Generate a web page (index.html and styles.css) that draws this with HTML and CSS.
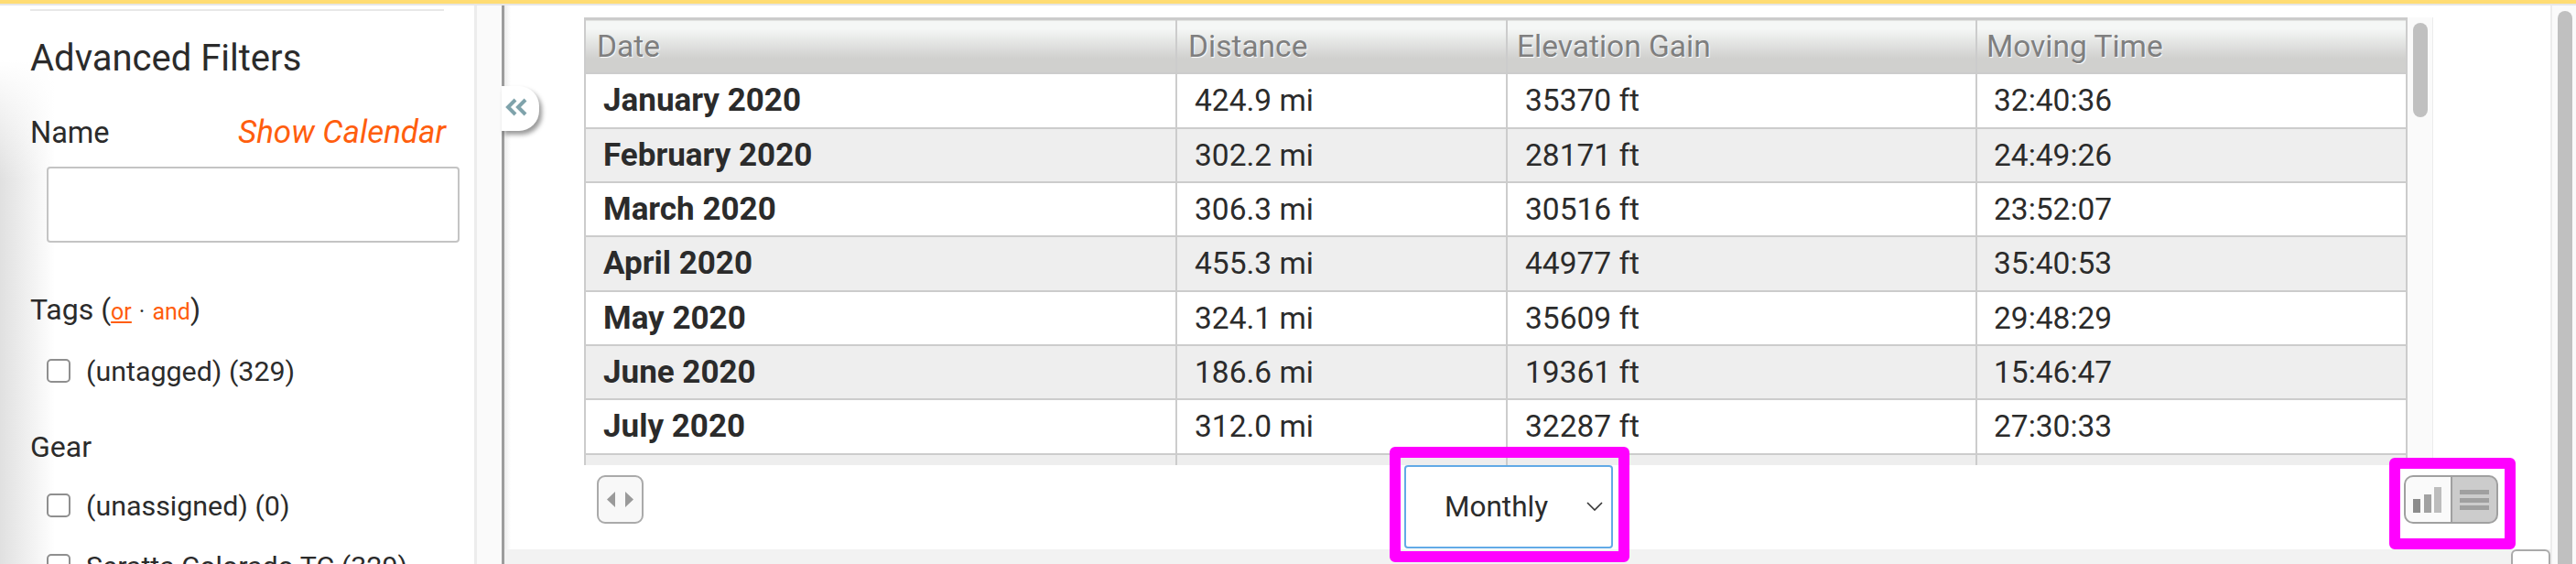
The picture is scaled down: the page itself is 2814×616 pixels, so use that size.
FILE: index.html
```html
<!DOCTYPE html>
<html>
<head>
  <title>Activity Summary</title>
  <link rel="stylesheet" href="styles.css">
</head>
<body>
  <div class="top-bar"></div>

  <div class="page">
    <!-- Filters column -->
    <aside class="sidebar">
      <hr class="side-rule">
      <h2 class="side-title">Advanced Filters</h2>

      <div class="name-row">
        <span>Name</span>
        <a class="calendar-link">Show Calendar</a>
      </div>
      <input class="name-input" type="text">

      <div class="filter-label tags-label">Tags (<a class="mode-link active">or</a><span class="mode-dot">·</span><a class="mode-link">and</a>)</div>
      <label class="check-row"><input type="checkbox">(untagged) (329)</label>

      <div class="filter-label gear-label">Gear</div>
      <label class="check-row"><input type="checkbox">(unassigned) (0)</label>
      <label class="check-row"><input type="checkbox">Seratta Colorado TC (329)</label>
    </aside>

    <div class="gutter"></div>

    <main class="main">
      <button class="collapse-tab">
        <svg width="26" height="20" viewBox="0 0 26 20"><path d="M12 2 L4 10 L12 18 M23 2 L15 10 L23 18" fill="none" stroke="#7fa3ab" stroke-width="4"/></svg>
      </button>

      <div class="content">
        <div class="table-area">
          <div class="table-clip">
            <table class="summary-table">
              <colgroup>
                <col class="col-date">
                <col class="col-distance">
                <col class="col-elevation">
                <col>
              </colgroup>
              <thead>
                <tr><th>Date</th><th>Distance</th><th>Elevation Gain</th><th>Moving Time</th></tr>
              </thead>
              <tbody>
                <tr><td>January 2020</td><td>424.9 mi</td><td>35370 ft</td><td>32:40:36</td></tr>
                <tr><td>February 2020</td><td>302.2 mi</td><td>28171 ft</td><td>24:49:26</td></tr>
                <tr><td>March 2020</td><td>306.3 mi</td><td>30516 ft</td><td>23:52:07</td></tr>
                <tr><td>April 2020</td><td>455.3 mi</td><td>44977 ft</td><td>35:40:53</td></tr>
                <tr><td>May 2020</td><td>324.1 mi</td><td>35609 ft</td><td>29:48:29</td></tr>
                <tr><td>June 2020</td><td>186.6 mi</td><td>19361 ft</td><td>15:46:47</td></tr>
                <tr><td>July 2020</td><td>312.0 mi</td><td>32287 ft</td><td>27:30:33</td></tr>
                <tr><td></td><td></td><td></td><td></td></tr>
              </tbody>
            </table>
          </div>
          <div class="table-track"><div class="table-thumb"></div></div>
        </div>

        <div class="controls">
          <button class="expand-btn">
            <svg width="29" height="17" viewBox="0 0 29 17"><path d="M9 0 V17 L0 8.5 Z M20 0 V17 L29 8.5 Z" fill="#9a9a9a"/></svg>
          </button>

          <div class="period-select">
            <span>Monthly</span>
            <svg class="chevron" width="18" height="10" viewBox="0 0 18 10"><path d="M1 1 L9 9 L17 1" fill="none" stroke="#333" stroke-width="1.6"/></svg>
            <div class="highlight highlight-select"></div>
          </div>

          <div class="view-toggle">
            <button class="toggle-half">
              <svg width="34" height="30" viewBox="0 0 34 30">
                <rect x="0" y="14" width="8" height="15" fill="#8c8c8c"/>
                <rect x="12" y="9" width="8" height="20" fill="#a2a2a2"/>
                <rect x="23" y="1" width="8" height="28" fill="#bdbdbd"/>
              </svg>
            </button>
            <button class="toggle-half selected">
              <svg width="32" height="22" viewBox="0 0 32 22">
                <rect y="0" width="32" height="5" fill="#a0a0a0"/>
                <rect y="9" width="32" height="5" fill="#a0a0a0"/>
                <rect y="17" width="32" height="5" fill="#a0a0a0"/>
              </svg>
            </button>
            <div class="highlight highlight-toggle"></div>
          </div>
        </div>
      </div>

      <div class="bottom-band"><div class="band-box"></div></div>
    </main>

    <div class="page-track"><div class="page-thumb"></div></div>
  </div>
</body>
</html>
```

FILE: styles.css
```css
html, body {
  margin: 0;
  height: 616px;
  overflow: hidden;
}

body {
  font-family: Roboto, "Liberation Sans", sans-serif;
  color: #2b2b2b;
  background-color: #fff;
}

.top-bar {
  height: 4px;
  background-color: #ffdc73;
  border-bottom: 2px solid #e6e6e6;
}

.page {
  display: flex;
  height: 610px;
  overflow: hidden;
}

/* Filters column */
.sidebar {
  width: 485px;
  flex-shrink: 0;
  padding-left: 33px;
  padding-top: 4px;
  border-right: 3px solid #ececec;
  background:
    linear-gradient(to bottom, #fff 60px, rgba(255, 255, 255, 0) 190px),
    linear-gradient(to right, #e0e0e0, #fff 60px);
}

.side-rule {
  width: 452px;
  height: 2px;
  margin: 0;
  border: none;
  background-color: #e8e8e8;
}

.side-title {
  margin: 29px 0 0;
  font-size: 40px;
  line-height: 46px;
  font-weight: 400;
}

.name-row {
  display: flex;
  justify-content: space-between;
  align-items: baseline;
  width: 454px;
  margin-top: 39px;
  font-size: 32.5px;
  line-height: 38px;
}

.calendar-link {
  color: #ff5e0e;
  font-size: 35px;
  font-style: italic;
}

.name-input {
  display: block;
  box-sizing: border-box;
  width: 451px;
  height: 83px;
  margin: 18px 0 0 18px;
  background-color: #fff;
  border: 2px solid #c4c4c4;
  border-radius: 4px;
}

.filter-label {
  font-size: 32px;
  line-height: 38px;
}

.tags-label {
  margin-top: 54px;
}

.gear-label {
  margin-top: 46px;
}

.mode-link {
  color: #ff5e0e;
  font-size: 25px;
}

.mode-link.active {
  text-decoration: underline;
}

.mode-dot {
  margin: 0 8px;
  font-size: 25px;
}

.check-row {
  display: flex;
  align-items: center;
  gap: 17px;
  height: 36px;
  margin: 27px 0 0 18px;
  font-size: 30.4px;
  white-space: pre;
}

.check-row + .check-row {
  margin-top: 30px;
}

.check-row input {
  appearance: none;
  flex-shrink: 0;
  width: 26px;
  height: 26px;
  margin: 0;
  background-color: #fff;
  border: 2px solid #8f8f8f;
  border-radius: 5px;
}

.gutter {
  width: 27px;
  flex-shrink: 0;
  background-color: #fafafa;
  border-right: 3px solid #9c9c9c;
}

/* Main area */
.main {
  position: relative;
  flex: 1;
  display: flex;
  flex-direction: column;
  background: linear-gradient(to right, #ececec, #fff 7px);
}

.collapse-tab {
  position: absolute;
  left: -3px;
  top: 88px;
  display: flex;
  align-items: center;
  width: 41px;
  height: 49px;
  padding: 0 0 4px 3px;
  background-color: #fff;
  border: none;
  border-radius: 0 22px 22px 0;
  box-shadow: 3px 4px 5px rgba(0, 0, 0, 0.4);
}

.content {
  flex: 1;
  padding: 13px 0 0 87px;
}

.table-area {
  display: flex;
  height: 489px;
}

.table-clip {
  width: 1992px;
  height: 489px;
  overflow: hidden;
}

.summary-table {
  width: 1992px;
  table-layout: fixed;
  border-collapse: collapse;
  border: 2px solid #ccc;
  border-top-width: 3px;
}

.col-date {
  width: 646px;
}

.col-distance {
  width: 361px;
}

.col-elevation {
  width: 513px;
}

.summary-table th {
  box-sizing: border-box;
  height: 59px;
  padding: 0 0 0 12px;
  text-align: left;
  font-size: 33.5px;
  font-weight: 400;
  color: #7f7f7f;
  text-shadow: 1px 1px 1px #fff;
  background: linear-gradient(to bottom, #f5f7f6 15%, #d0d0ce 72%);
  border: 2px solid #ccc;
}

.summary-table th:nth-child(n+3) {
  padding-left: 10px;
}

.summary-table td {
  box-sizing: border-box;
  height: 59px;
  padding: 0 0 0 19px;
  font-size: 33.5px;
  border: 2px solid #ccc;
}

.summary-table tbody tr:nth-child(3n+1) td {
  height: 60px;
}

.summary-table td:first-child {
  font-size: 35px;
  font-weight: 700;
}

.summary-table td:last-child {
  padding-left: 18px;
}

.summary-table tbody tr:nth-child(even) {
  background-color: #eee;
}

.table-track {
  box-sizing: border-box;
  width: 28px;
  padding: 6px 0 0 6px;
  background-color: #fafafa;
  border-right: 1px solid #ececec;
}

.table-thumb {
  width: 16px;
  height: 103px;
  background-color: #c0c0c0;
  border-radius: 8px;
}

/* Row under the table */
.controls {
  display: grid;
  grid-template-columns: 896px 228px 1fr;
  align-items: start;
  padding-right: 57px;
}

.expand-btn {
  display: flex;
  align-items: center;
  justify-content: center;
  width: 51px;
  height: 53px;
  margin: 11px 0 0 14px;
  padding: 0;
  background-color: #f8f8f8;
  border: 2px solid #aaa;
  border-radius: 9px;
}

.period-select {
  position: relative;
  box-sizing: border-box;
  display: flex;
  align-items: center;
  height: 91px;
  padding-left: 42px;
  font-size: 31.5px;
  background-color: #fff;
  border: 2px solid #62aae6;
  border-radius: 4px;
}

.chevron {
  position: absolute;
  right: 9px;
  top: 38px;
}

.view-toggle {
  position: relative;
  justify-self: end;
  display: flex;
  width: 103px;
  height: 53px;
  margin-top: 11px;
}

.toggle-half {
  box-sizing: border-box;
  display: flex;
  align-items: center;
  justify-content: center;
  width: 51px;
  padding: 0;
  background-color: #fafafa;
  border: 2px solid #a0a0a0;
  border-right: none;
  border-radius: 10px 0 0 10px;
}

.toggle-half.selected {
  width: 52px;
  background-color: #ccc;
  border-right: 2px solid #a0a0a0;
  border-radius: 0 10px 10px 0;
}

/* Magenta annotation frames */
.highlight {
  position: absolute;
  box-sizing: border-box;
  border: 12px solid #f0f;
  border-radius: 6px;
  pointer-events: none;
}

.highlight-select {
  left: -18px;
  top: -22px;
  width: 262px;
  height: 126px;
}

.highlight-toggle {
  left: -16px;
  top: -19px;
  width: 138px;
  height: 100px;
}

.bottom-band {
  display: flex;
  justify-content: flex-end;
  height: 16px;
  background-color: #f2f2f2;
}

.band-box {
  box-sizing: border-box;
  width: 43px;
  height: 20px;
  background-color: #fff;
  border: 2px solid #aaa;
  border-radius: 6px 6px 0 0;
}

.page-track {
  box-sizing: border-box;
  width: 28px;
  flex-shrink: 0;
  padding: 6px 4px 0 6px;
  background-color: #fafafa;
  border-left: 2px solid #ececec;
}

.page-thumb {
  width: 16px;
  height: 700px;
  background-color: #c0c0c0;
  border-radius: 8px;
}
```
